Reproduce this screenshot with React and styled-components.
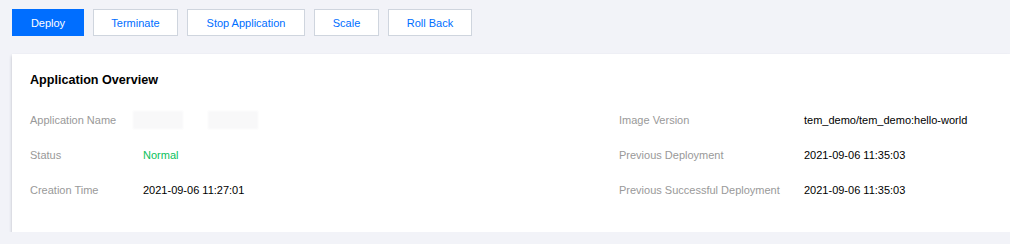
import React from 'react'
import styled, { createGlobalStyle } from 'styled-components'

const GlobalStyle = createGlobalStyle`
    body {
        margin: 0;
        background: #f2f3f8;
        font-family: "Liberation Sans", Arial, Helvetica, sans-serif;
        overflow: hidden;
    }
`

const actions = [
    { label: 'Deploy', width: 72, primary: true },
    { label: 'Terminate', width: 85 },
    { label: 'Stop Application', width: 118 },
    { label: 'Scale', width: 65 },
    { label: 'Roll Back', width: 84 },
]

const leftRows = [
    { label: 'Application Name', hidden: true },
    { label: 'Status', value: 'Normal', tone: 'success' },
    { label: 'Creation Time', value: '2021-09-06 11:27:01' },
]

const rightRows = [
    { label: 'Image Version', value: 'tem_demo/tem_demo:hello-world' },
    { label: 'Previous Deployment', value: '2021-09-06 11:35:03' },
    { label: 'Previous Successful Deployment', value: '2021-09-06 11:35:03' },
]

function InfoColumn({ rows, labelWidth }) {
    return (
        <Column>
            {rows.map((row) => (
                <Row key={row.label}>
                    <Label $width={labelWidth}>{row.label}</Label>
                    {row.hidden ? (
                        <Masked>
                            <Blur />
                            <Blur />
                        </Masked>
                    ) : (
                        <Value $tone={row.tone}>{row.value}</Value>
                    )}
                </Row>
            ))}
        </Column>
    )
}

function App() {
    return (
        <Page>
            <GlobalStyle />
            <Toolbar>
                {actions.map((a) => (
                    <Button key={a.label} $width={a.width} $primary={a.primary}>
                        {a.label}
                    </Button>
                ))}
            </Toolbar>
            <Card>
                <Title>Application Overview</Title>
                <Columns>
                    <InfoColumn rows={leftRows} labelWidth={113} />
                    <InfoColumn rows={rightRows} labelWidth={185} />
                </Columns>
            </Card>
        </Page>
    )
}

const Page = styled.div`
    padding: 9px 0 0 12px;
`

const Toolbar = styled.div`
    display: flex;
    gap: 9px;
    margin-bottom: 18px;
`

const Button = styled.button`
    box-sizing: border-box;
    width: ${(p) => p.$width}px;
    height: 27px;
    padding: 0;
    font-family: inherit;
    font-size: 11px;
    color: ${(p) => (p.$primary ? '#fff' : '#006eff')};
    background: ${(p) => (p.$primary ? '#006eff' : '#fff')};
    border: 1px solid ${(p) => (p.$primary ? '#006eff' : '#cfd5de')};
    cursor: pointer;
`

const Card = styled.div`
    background: #fff;
    padding: 16px 18px 32px;
    box-shadow: 0 2px 3px 0 rgba(54, 58, 80, 0.3);
`

const Title = styled.h3`
    margin: 0 0 20px;
    font-size: 12.6px;
    line-height: 20px;
    font-weight: bold;
    color: #000;
`

const Columns = styled.div`
    display: grid;
    grid-template-columns: 589px 1fr;
`

const Column = styled.div`
    display: flex;
    flex-direction: column;
    gap: 15px;
`

const Row = styled.div`
    display: flex;
    align-items: center;
    height: 20px;
    font-size: 11px;
`

const Label = styled.span`
    flex: none;
    width: ${(p) => p.$width}px;
    color: #999;
`

const Value = styled.span`
    color: ${(p) => (p.$tone === 'success' ? '#0abf5b' : '#000')};
`

const Masked = styled.span`
    display: flex;
    gap: 25px;
    margin-left: -10px;
`

const Blur = styled.span`
    width: 50px;
    height: 18px;
    background: #f8f8f9;
    filter: blur(1px);
`

export default App
